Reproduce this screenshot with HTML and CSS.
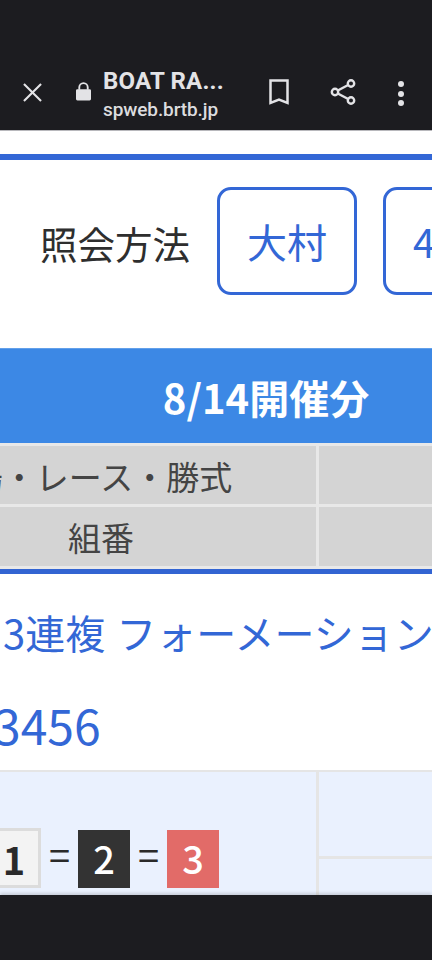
FILE: index.html
```html
<!DOCTYPE html>
<html lang="ja">
<head>
<meta charset="utf-8">
<title>BOAT RACE</title>
<link rel="stylesheet" href="styles.css">
</head>
<body>
<header class="bar">
  <svg class="ic-close" viewBox="0 0 20 20"><path d="M1 1L19 19M19 1L1 19"/></svg>
  <svg class="ic-lock" viewBox="0 0 16 20"><path d="M1.5 7.5h13a1.5 1.5 0 0 1 1.5 1.5v9a1.5 1.5 0 0 1-1.5 1.5h-13A1.500 1.500 0 0 1 0 18V9a1.500 1.500 0 0 1 1.500-1.500z"/><path class="shackle" d="M3.500 8V5.500a4.500 4.500 0 0 1 9 0V8"/></svg>
  <div class="titles">
    <div class="site-title">BOAT RA...</div>
    <div class="site-url">spweb.brtb.jp</div>
  </div>
  <svg class="ic-mark" viewBox="0 0 20 26"><path d="M1.500 1.500h17v22.500L10 20.500 1.500 24z"/></svg>
  <svg class="ic-share" viewBox="0 0 26 28"><path d="M21 5.500L5 14l16 8.500"/><circle cx="21" cy="5.500" r="3.200"/><circle cx="5" cy="14" r="3.200"/><circle cx="21" cy="22.500" r="3.200"/></svg>
  <div class="ic-more"><i></i><i></i><i></i></div>
</header>
<main class="view">
  <div class="page">
    <div class="rule-top"></div>
    <div class="filter">
      <span class="filter-label">照会方法</span>
      <a class="chip">大村</a>
      <a class="chip">4R</a>
    </div>
    <h2 class="date-head">8/14開催分</h2>
    <div class="table-head">
      <div class="th">場・レース・勝式</div><div class="th"></div>
      <div class="th">組番</div><div class="th"></div>
    </div>
    <div class="rule-mid"></div>
    <div class="race-name">3連複 フォーメーション</div>
    <div class="race-nums">3456</div>
    <div class="result">
      <div class="combo-cell">
        <div class="combo">
          <span class="boat boat-1">1</span><span class="eq">=</span><span class="boat boat-2">2</span><span class="eq">=</span><span class="boat boat-3">3</span>
        </div>
      </div>
      <div class="side-cell">
        <div class="side-a"></div>
        <div class="side-b"></div>
      </div>
    </div>
  </div>
</main>
<footer class="nav"></footer>
</body>
</html>
```
FILE: styles.css
```css
* { box-sizing: border-box; }
html, body { margin: 0; padding: 0; }
body {
  width: 432px;
  height: 960px;
  overflow: hidden;
  background: #1c1c20;
  font-family: "Noto Sans CJK JP", "Noto Sans", sans-serif;
  display: flex;
  flex-direction: column;
}
.bar {
  height: 131px;
  flex: none;
  background: #1c1c20;
  border-bottom: 1px solid #b8b8bc;
  padding-top: 68px;
  display: flex;
  align-items: flex-start;
  position: relative;
}
.ic-close { width: 19px; height: 19px; margin: 15px 0 0 23px; flex: none; fill: none; stroke: #e3e3e6; stroke-width: 2.200; }
.ic-lock { width: 15px; height: 19px; margin: 14px 0 0 34px; flex: none; fill: #e3e3e6; }
.ic-lock .shackle { fill: none; stroke: #e3e3e6; stroke-width: 2; }
.titles { width: 155px; margin-left: 12px; flex: none; color: #e3e3e6; font-family: Roboto, sans-serif; }
.site-title { font-size: 24px; font-weight: 700; line-height: 26px; height: 26px; margin-top: 0; letter-spacing: 0.2px; }
.site-url { font-size: 19px; font-weight: 500; line-height: 22px; margin-top: 5px; color: #dcdcdf; letter-spacing: -0.1px; }
.ic-mark { width: 20px; height: 26px; margin: 11px 0 0 11px; flex: none; fill: none; stroke: #e3e3e6; stroke-width: 2.500; }
.ic-share { width: 26px; height: 28px; margin: 10px 0 0 41px; flex: none; fill: #1c1c20; stroke: #e3e3e6; stroke-width: 2.400; }
.ic-more { display: flex; flex-direction: column; gap: 3.500px; margin: 13px 0 0 42px; flex: none; }
.ic-more i { width: 6px; height: 6px; border-radius: 50%; background: #e3e3e6; }

.view { height: 764px; flex: none; overflow: hidden; background: #fff; }
.page { width: 760px; margin-left: -114px; }
.rule-top { height: 6px; margin-top: 23px; background: #3367d6; }
.filter { height: 188px; display: flex; align-items: flex-start; padding: 27px 0 0 154px; }
.filter-label { font-size: 37.500px; line-height: 54px; margin-top: 29px; color: #2e2e2e; width: 177px; flex: none; }
.chip {
  height: 108px; flex: none;
  border: 3px solid #3367d6; border-radius: 14px;
  color: #3367d6; font-size: 40px; line-height: 54px;
  display: flex; align-items: center;
  padding: 0 27px;
  margin-right: 26px;
}
.date-head {
  margin: 0; height: 95px; background: #3c88e5; color: #fff;
  font-size: 40px; font-weight: 700; line-height: 97px; text-align: center;
  border-top: 1px solid #62a0ea;
}
.table-head { display: grid; grid-template-columns: 430px 1fr; grid-template-rows: 58px 59px; gap: 3px; padding-top: 3px; background: #e8e8e8; }
.th { background: #d4d4d4; color: #444; font-size: 33px; line-height: 60px; text-align: center; white-space: nowrap; }
.rule-mid { height: 5px; margin-top: 3px; box-shadow: 0 -3px 0 #e8e8e8; background: #3264d2; }
.race-name { font-size: 40px; line-height: 56px; color: #3367d6; padding: 30px 0 0 117px; height: 120px; white-space: nowrap; word-spacing: 2px; }
.race-nums { font-size: 48px; line-height: 60px; color: #3367d6; padding-left: 108px; height: 76px; }
.result { height: 125px; display: grid; grid-template-columns: 430px 1fr; gap: 3px; background: #e5e5e5; padding-top: 2px; }
.combo-cell { background: #eaf1fe; padding: 56px 0 0 0; }
.combo { display: flex; align-items: flex-start; padding-left: 55px; }
.boat { width: 52px; height: 58px; flex: none; font-size: 38px; font-weight: 500; line-height: 56px; text-align: center; margin-top: 2px; }
.boat-1 { width: 100px; height: 60px; margin-top: 0; background: #f3f3f3; border: 3px solid #dcdcdc; color: #2a2a2a; padding-left: 46px; font-weight: 700; }
.boat-2 { background: #333; color: #fff; }
.boat-3 { background: #e26b68; color: #fff; }
.eq { width: 37px; flex: none; text-align: center; font-size: 38px; line-height: 52px; color: #2a2a2a; }
.side-cell { display: flex; flex-direction: column; background: #e5e5e5; gap: 3px; }
.side-a { height: 84px; background: #eaf1fe; }
.side-b { flex: 1; background: #eaf1fe; }
.nav { flex: 1; background: #1c1c20; position: relative; box-shadow: 0 -2px 3px rgba(0,0,0,.15); }
```
